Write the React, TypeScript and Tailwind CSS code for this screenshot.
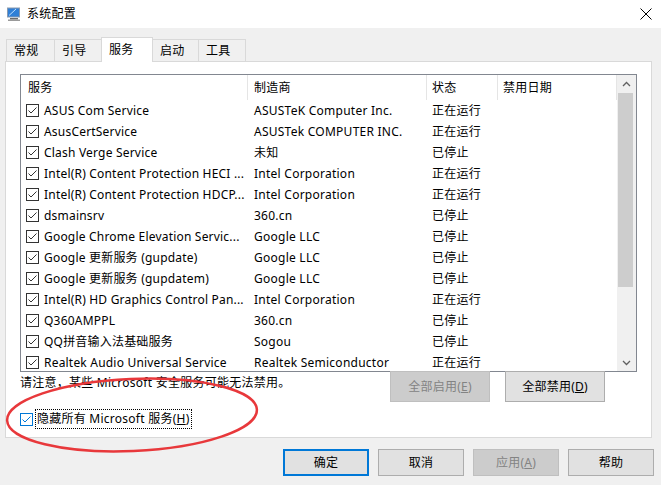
import React from "react";
import clsx from "clsx";

const services = [
  { name: "ASUS Com Service", maker: "ASUSTeK Computer Inc.", status: "正在运行" },
  { name: "AsusCertService", maker: "ASUSTek COMPUTER INC.", status: "正在运行" },
  { name: "Clash Verge Service", maker: "未知", status: "已停止" },
  { name: "Intel(R) Content Protection HECI ...", maker: "Intel Corporation", status: "正在运行" },
  { name: "Intel(R) Content Protection HDCP...", maker: "Intel Corporation", status: "正在运行" },
  { name: "dsmainsrv", maker: "360.cn", status: "已停止" },
  { name: "Google Chrome Elevation Servic...", maker: "Google LLC", status: "已停止" },
  { name: "Google 更新服务 (gupdate)", maker: "Google LLC", status: "已停止" },
  { name: "Google 更新服务 (gupdatem)", maker: "Google LLC", status: "已停止" },
  { name: "Intel(R) HD Graphics Control Pan...", maker: "Intel Corporation", status: "正在运行" },
  { name: "Q360AMPPL", maker: "360.cn", status: "已停止" },
  { name: "QQ拼音输入法基础服务", maker: "Sogou", status: "已停止" },
  { name: "Realtek Audio Universal Service", maker: "Realtek Semiconductor", status: "正在运行" },
];

const tabs = [
  { label: "常规", w: "w-[49px]" },
  { label: "引导", w: "w-[48px]" },
  { label: "服务", w: "w-[52px]", active: true },
  { label: "启动", w: "w-[47px]" },
  { label: "工具", w: "w-[48px]" },
];

const Check = ({ focus = false }: { focus?: boolean }) => (
  <span
    className={clsx(
      "flex h-[13px] w-[13px] shrink-0 items-center justify-center border bg-white",
      focus ? "border-[#0078d7]" : "border-[#333333]"
    )}
  >
    <svg width="11" height="11" viewBox="0 0 11 11">
      <path
        d="M1.5 5.5 L4 8 L9.5 2.5"
        fill="none"
        stroke={focus ? "#0078d7" : "#333333"}
        strokeWidth="1"
      />
    </svg>
  </span>
);

const Btn = ({
  children,
  className,
  disabled = false,
  primary = false,
}: {
  children: React.ReactNode;
  className?: string;
  disabled?: boolean;
  primary?: boolean;
}) => (
  <div
    className={clsx(
      "flex items-center justify-center",
      disabled
        ? "border border-[#bfbfbf] bg-[#cccccc] text-[#838383]"
        : "bg-[#e1e1e1] text-black",
      !disabled && (primary ? "border-2 border-[#0078d7]" : "border border-[#adadad]"),
      className
    )}
  >
    {children}
  </div>
);

const MonitorIcon = () => (
  <svg width="16" height="16" viewBox="0 0 16 16">
    <rect x="1" y="1.5" width="13" height="10" fill="#8a9bb0" />
    <rect x="2" y="2.5" width="11" height="8" fill="#2f7fd6" />
    <path d="M3 9.5 L10 3" stroke="#bfe0ff" strokeWidth="1" />
    <rect x="4" y="12" width="8" height="1.5" fill="#6b6b6b" />
    <rect x="2" y="13.5" width="12" height="1.5" fill="#9a9a9a" />
  </svg>
);

export default function App() {
  return (
    <div className="relative h-[485px] w-[661px] overflow-hidden bg-[#f0f0f0] font-['Noto_Sans','Noto_Sans_CJK_SC',sans-serif] text-[12px] leading-[16px] tracking-[0.25px] text-black">
      {/* title bar */}
      <div className="flex h-[28px] items-center bg-white pl-[6px] pr-[9px]">
        <MonitorIcon />
        <span className="ml-[5px]">系统配置</span>
        <svg className="ml-auto" width="12" height="12" viewBox="0 0 12 12">
          <path d="M0.5 0.5 L11.5 11.5 M11.5 0.5 L0.5 11.5" stroke="#000" strokeWidth="1" />
        </svg>
      </div>

      {/* tabs */}
      <div className="flex items-end pl-[6px] pt-[9px]">
        {tabs.map((t, i) => (
          <div
            key={t.label}
            className={clsx(
              "flex items-center border border-b-0 border-[#d9d9d9] pl-[7px]",
              t.w,
              i > 0 && "-ml-px",
              t.active
                ? "relative z-10 -mb-px h-[25px] bg-white"
                : "h-[22px] bg-[#f0f0f0] pt-[1px]"
            )}
          >
            {t.label}
          </div>
        ))}
      </div>

      {/* panel */}
      <div className="ml-[5px] h-[377px] w-[647px] border border-[#d9d9d9] bg-white pl-[14px] pt-[12px]">
        <div className="flex h-[298px] w-[617px] overflow-hidden border border-[#828790] bg-white">
          <div className="w-[596px] shrink-0 overflow-hidden">
            <div className="flex h-[25px]">
              <div className="flex w-[227px] items-center border-r border-[#e5e5e5] pl-[7px]">服务</div>
              <div className="flex w-[179px] items-center border-r border-[#e5e5e5] pl-[6px]">制造商</div>
              <div className="flex w-[71px] items-center border-r border-[#e5e5e5] pl-[5px]">状态</div>
              <div className="flex w-[119px] items-center border-r border-[#e5e5e5] pl-[5px]">禁用日期</div>
            </div>
            {services.map((s) => (
              <div key={s.name} className="flex h-[21px] items-center">
                <div className="flex w-[227px] shrink-0 items-center pl-[5px]">
                  <Check />
                  <span className="ml-[5px] whitespace-nowrap tracking-[0.2px]">{s.name}</span>
                </div>
                <div className="w-[179px] shrink-0 whitespace-nowrap pl-[6px]">{s.maker}</div>
                <div className="w-[71px] shrink-0 whitespace-nowrap pl-[5px]">{s.status}</div>
              </div>
            ))}
          </div>
          {/* scrollbar */}
          <div className="flex w-[19px] flex-col bg-[#f0f0f0]">
            <div className="flex h-[17px] items-center justify-center">
              <svg width="9" height="6" viewBox="0 0 9 6">
                <path d="M1 5 L4.5 1.5 L8 5" fill="none" stroke="#606060" strokeWidth="1.3" />
              </svg>
            </div>
            <div className="ml-[1px] mt-[1px] h-[194px] w-[15px] bg-[#cdcdcd]" />
            <div className="flex-1" />
            <div className="flex h-[17px] items-center justify-center">
              <svg width="9" height="6" viewBox="0 0 9 6">
                <path d="M1 1 L4.5 4.5 L8 1" fill="none" stroke="#606060" strokeWidth="1.3" />
              </svg>
            </div>
          </div>
        </div>

        <div className="-mt-px flex">
          <div className="mt-[4px] w-[370px] whitespace-nowrap">请注意，某些 Microsoft 安全服务可能无法禁用。</div>
          <Btn disabled className="relative h-[31px] w-[100px]">
            全部启用(<span className="underline">E</span>)
          </Btn>
          <Btn className="relative ml-[15px] h-[31px] w-[100px]">
            全部禁用(<span className="underline">D</span>)
          </Btn>
        </div>

        <div className="mt-[7px] flex h-[20px] items-center">
          <Check focus />
          <span className="ml-[2px] flex h-[20px] items-center border border-dotted border-black px-[1px] whitespace-nowrap">
            隐藏所有 Microsoft 服务(<span className="underline">H</span>)
          </span>
        </div>
      </div>

      {/* dialog buttons */}
      <div className="mt-[11px] flex justify-end gap-[9px] pr-[7px]">
        <Btn primary className="h-[27px] w-[86px]">确定</Btn>
        <Btn className="h-[27px] w-[86px]">取消</Btn>
        <Btn disabled className="h-[27px] w-[86px]">
          应用(<span className="underline">A</span>)
        </Btn>
        <Btn className="h-[27px] w-[86px]">帮助</Btn>
      </div>

      {/* red annotation ellipse */}
      <svg className="pointer-events-none absolute left-0 top-0" width="661" height="485">
        <ellipse
          cx="132"
          cy="415"
          rx="125"
          ry="36"
          transform="rotate(-2.5 132 415)"
          fill="none"
          stroke="#e8383b"
          strokeWidth="2.5"
        />
      </svg>
    </div>
  );
}
